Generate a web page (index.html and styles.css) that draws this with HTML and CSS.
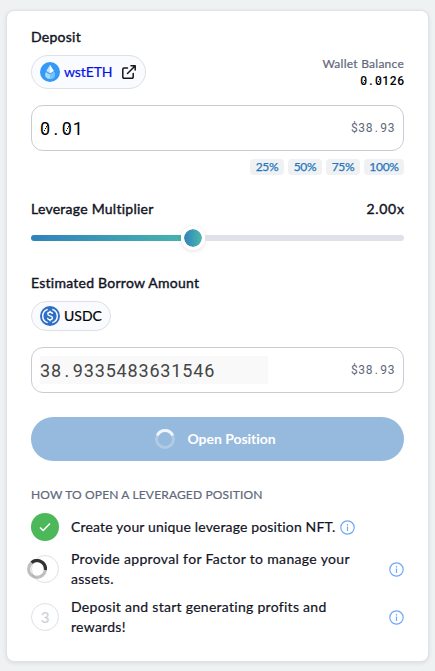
FILE: index.html
```html
<!DOCTYPE html>
<html lang="en">
<head>
<meta charset="utf-8">
<title>Open Position</title>
<link rel="stylesheet" href="styles.css">
</head>
<body>
<main class="card">
  <h2 class="label label-deposit">Deposit</h2>
  <div class="token-row">
    <a class="chip chip-deposit">
      <svg class="token" viewBox="0 0 20 20"><circle cx="10" cy="10" r="10" fill="#3499f7"/><path d="M10 3 6.2 9 10 11.2 13.8 9Z" fill="#c3e4ff"/><path d="M10 3v8.2L13.8 9Z" fill="#fff"/><path d="M5.9 10 10 12.5l4.1-2.5c2.2 4-.4 7-4.1 7s-6.300-3-4.100-7Z" fill="#a7d9fd"/><path d="M10 12.500l4.100-2.500c2.200 4-.4 7-4.100 7Z" fill="#72c2fb"/></svg>
      <span class="wst">wstETH</span>
      <svg class="ext" viewBox="0 0 14 14" fill="none" stroke="#15161b" stroke-width="1.500" stroke-linecap="round" stroke-linejoin="round"><path d="M5.500 3H2a1.200 1.200 0 0 0-1.200 1.200V12A1.200 1.200 0 0 0 2 13.200h8a1.200 1.200 0 0 0 1.200-1.200V8.500M9 .8h4.200V5M13 1 5.500 8.500"/></svg>
    </a>
    <div class="wallet"><span class="wallet-label">Wallet Balance</span><span class="wallet-value mono"><b>0</b><i>.</i><b>0</b>126</span></div>
  </div>
  <div class="field">
    <span class="amount mono"><b>0</b><i>.</i><b>0</b>1</span>
    <span class="usd mono">$38<i>.</i>93</span>
  </div>
  <div class="percents"><button>25%</button><button>50%</button><button>75%</button><button class="full">100%</button></div>
  <div class="leverage"><h2 class="label label-leverage">Leverage Multiplier</h2><span class="label multiplier">2.00x</span></div>
  <div class="slider"><div class="fill"></div><div class="thumb"></div><div class="rest"></div></div>
  <h2 class="label label-borrow">Estimated Borrow Amount</h2>
  <div class="chip chip-borrow">
    <svg class="token" viewBox="0 0 20 20"><circle cx="10" cy="10" r="10" fill="#2e6fc7"/><g fill="none" stroke="#fff" stroke-width="1.400"><path d="M7.700 3.300a7 7 0 0 0 0 13.400M12.300 3.300a7 7 0 0 1 0 13.400"/><path d="M12.300 8c0-1-1-1.700-2.300-1.700S7.800 7 7.800 8c0 2.500 4.600 1.200 4.600 3.800 0 1.200-1 1.900-2.400 1.900s-2.400-.7-2.400-1.900M10 4.800v1.600M10 13.600v1.600"/></g></svg>
    <span class="usdc">USDC</span>
  </div>
  <div class="field field-borrow">
    <span class="amount mono readonly">38<i>.</i>9335483631546</span>
    <span class="usd mono">$38<i>.</i>93</span>
  </div>
  <button class="submit"><svg class="spin" viewBox="0 0 20 20" fill="none" stroke="#fff" stroke-width="3"><circle cx="10" cy="10" r="8.500" opacity=".25"/><path d="M2.300 6.500a8.500 8.500 0 0 1 15.400 0" opacity=".8"/></svg><span>Open Position</span></button>
  <h3 class="steps-title">HOW TO OPEN A LEVERAGED POSITION</h3>
  <ol class="steps">
    <li>
      <span class="dot done"><svg viewBox="0 0 12 10" fill="none" stroke="#fff" stroke-width="1.600"><path d="M1 5.500 4.200 8.500 11 1.500"/></svg></span>
      <p class="s1">Create your unique leverage position NFT.</p>
      <svg class="info" viewBox="0 0 15 15" fill="none" stroke="#6fa8f7" stroke-width="1.200"><circle cx="7.500" cy="7.500" r="6.700"/><path d="M7.500 6.500v4.500M7.500 4v1.400"/></svg>
    </li>
    <li class="tall">
      <span class="dot"><svg class="spin busy" viewBox="0 0 20 20" fill="none" stroke-width="3.200"><circle cx="10" cy="10" r="8.400" stroke="#000" opacity=".25"/><path d="M4.600 3.600A8.400 8.400 0 0 1 18.400 11" stroke="#333"/></svg></span>
      <p><span class="s2">Provide approval for Factor to manage your</span><br><span class="s3">assets.</span></p>
      <svg class="info end" viewBox="0 0 15 15" fill="none" stroke="#6fa8f7" stroke-width="1.200"><circle cx="7.500" cy="7.500" r="6.700"/><path d="M7.500 6.500v4.500M7.500 4v1.400"/></svg>
    </li>
    <li class="tall">
      <span class="dot number">3</span>
      <p class="s3">Deposit and start generating profits and<br>rewards!</p>
      <svg class="info end" viewBox="0 0 15 15" fill="none" stroke="#6fa8f7" stroke-width="1.200"><circle cx="7.500" cy="7.500" r="6.700"/><path d="M7.500 6.500v4.500M7.500 4v1.400"/></svg>
    </li>
  </ol>
</main>
</body>
</html>
```
FILE: styles.css
```css
* { box-sizing: border-box; }
body { margin: 0; padding: 10px 6px; background: #eef2f3; font-family: Lato, sans-serif; color: #12141f; font-size: 14px; line-height: 20px; }
h2, h3, p, ol { margin: 0; padding: 0; }
button { border: 0; font-family: inherit; }
svg { display: block; flex: none; }
.card { height: 652px; padding: 16px 24px; border: 1px solid #dfe2e7; border-radius: 8px; background: #fff; box-shadow: 0 1px 4px #00000018; }
.label { font-size: 14px; font-weight: 400; line-height: 20px; -webkit-text-stroke: .4px; white-space: nowrap; letter-spacing: .25px; }
.multiplier { letter-spacing: .7px; margin-right: -.6px; }
.token-row { display: flex; justify-content: space-between; height: 34px; margin-top: 8px; }
.chip { display: flex; align-items: center; border: 1px solid #dfe0e6; border-radius: 18px; background: #fafbff; padding-left: 8px; white-space: nowrap; }
.chip-deposit { width: 115px; height: 34px; }
.token { width: 20px; height: 20px; margin-right: 4px; }
.wst { width: 58px; color: #0014e6; letter-spacing: -.1px; -webkit-text-stroke: .2px; }
.ext { width: 14px; height: 14px; }
.wallet { display: flex; flex-direction: column; align-items: flex-end; font-size: 12px; line-height: 17px; }
.wallet-label { color: #61687b; letter-spacing: .25px; -webkit-text-stroke: .2px; }
.mono { font-family: Roboto, sans-serif; }
.mono i { display: inline-block; text-align: center; font-style: normal; }
.mono b { font-weight: inherit; background: linear-gradient(118deg, transparent 46%, currentColor 47% 54%, transparent 55%) no-repeat 45% 52% / 44% 36%; }
.wallet-value { font-weight: 500; letter-spacing: .6px; margin: 1px -.6px 0 0; color: #000; font-size: 12px; }
.wallet-value i { width: 7.300px; }
.field { display: flex; align-items: center; justify-content: space-between; height: 46px; margin-top: 16px; padding: 0 8px; border: 1px solid #cccbd5; border-radius: 12px; }
.amount { height: 28px; padding-top: 1px; line-height: 28px; font-size: 18px; letter-spacing: .83px; color: #000; }
.amount i { width: 10.900px; }
.readonly { width: 228px; background: #f9f9f9; color: #454545; }
.usd { font-size: 12px; letter-spacing: .6px; color: #61687b; }
.usd i { width: 7.300px; }
.percents { display: flex; justify-content: flex-end; gap: 4px; margin-top: 8px; }
.percents button { width: 34px; height: 16px; padding: 0; border-radius: 4px; background: #f0f1f3; color: #2376bd; font-size: 12px; line-height: 16px; letter-spacing: -.3px; -webkit-text-stroke: .25px; }
.percents .full { width: 40px; }
.leverage { display: flex; justify-content: space-between; margin-top: 24px; }
.slider { display: flex; align-items: center; height: 24px; margin-top: 7px; }
.fill { width: 150px; height: 6px; border-radius: 3px 0 0 3px; background: linear-gradient(90deg, #3182bd, #48b2ae); }
.thumb { width: 24px; height: 24px; border: 3px solid #fff; border-radius: 50%; background: linear-gradient(90deg, #3182bd, #4bb9aa) padding-box; box-shadow: 0 1px 4px #00000020; }
.rest { flex: 1; height: 6px; border-radius: 0 3px 3px 0; background: #e1e1e9; }
.label-borrow { margin-top: 23px; }
.chip-borrow { width: 80px; height: 30px; margin-top: 8px; }
.usdc { color: #000; -webkit-text-stroke: .2px; }
.submit { display: flex; align-items: center; justify-content: center; width: 100%; height: 44px; margin-top: 24px; padding: 0 4px 0 0; border-radius: 22px; background: #96bade; color: #fff; font-size: 14px; font-weight: 700; letter-spacing: -.05px; }
.submit span { padding-bottom: 1px; }
.spin { width: 20px; height: 20px; margin-right: 12px; }
.steps-title { margin-top: 24px; color: #61687b; font-size: 12px; font-weight: 400; letter-spacing: .15px; -webkit-text-stroke: .2px; white-space: nowrap; }
.steps { list-style: none; margin-top: 8px; }
.steps li { display: flex; align-items: center; height: 28px; white-space: nowrap; -webkit-text-stroke: .2px; }
.steps .tall { height: 40px; margin-top: 8px; }
.s1 { letter-spacing: .16px; }
.s2 { letter-spacing: .34px; }
.s3 { letter-spacing: .28px; }
.dot { display: flex; align-items: center; justify-content: center; flex: none; width: 28px; height: 28px; margin-right: 12px; border: 1px solid #dfe0e6; border-radius: 50%; }
.done { border: 0; background: #4cb85a; }
.done svg { width: 12px; height: 10px; }
.busy { margin: 0 16px 0 0; }
.number { color: #cfd1d8; font-size: 15px; }
.info { width: 15px; height: 15px; margin-left: 5px; }
.end { margin-left: auto; }
```
